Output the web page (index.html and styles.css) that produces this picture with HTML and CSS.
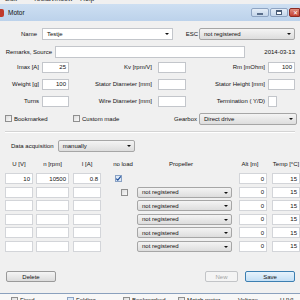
FILE: index.html
```html
<!DOCTYPE html>
<html lang="en">
<head>
    <meta charset="UTF-8">
    <title>Motor</title>
    <link rel="stylesheet" href="styles.css">
</head>
<body>
    <div class="menubar">
        <span class="m-edit">Edit</span>
        <span class="m-tools">Tools</span>
        <span class="m-window">Window</span>
        <span>Help</span>
    </div>

    <div class="window">
        <div class="titlebar">
            <span class="app-icon"></span>
            <span class="title">Motor</span>
            <div class="controls">
                <span class="ctl min"><i></i></span>
                <span class="ctl max"><i></i></span>
                <span class="ctl close">&#x2715;</span>
            </div>
        </div>

        <div class="form">
            <div class="row name-row">
                <span class="lbl w-name">Name</span>
                <div class="combo edit w-namebox">Testje<span class="arrow"></span></div>
                <span class="lbl w-esc">ESC</span>
                <div class="combo w-esc-box">not registered<span class="arrow"></span></div>
            </div>

            <div class="row remarks-row">
                <span class="lbl w-remarks">Remarks, Source</span>
                <div class="field w-remarks-box"></div>
                <span class="date">2014-03-13</span>
            </div>

            <div class="row spec-row first">
                <span class="lbl c1">Imax [A]</span>
                <div class="field num s1">25</div>
                <span class="lbl c2">Kv [rpm/V]</span>
                <div class="field num s2"></div>
                <span class="lbl c3">Rm [mOhm]</span>
                <div class="field num s3">100</div>
            </div>
            <div class="row spec-row">
                <span class="lbl c1">Weight [g]</span>
                <div class="field num s1">100</div>
                <span class="lbl c2">Stator Diameter [mm]</span>
                <div class="field num s2"></div>
                <span class="lbl c3">Stator Height [mm]</span>
                <div class="field num s3"></div>
            </div>
            <div class="row spec-row">
                <span class="lbl c1">Turns</span>
                <div class="field num s1"></div>
                <span class="lbl c2">Wire Diameter [mm]</span>
                <div class="field num s2"></div>
                <span class="lbl c3">Termination ( Y/D)</span>
                <div class="field tiny"></div>
            </div>

            <div class="row check-row">
                <label class="chk-item first"><span class="box"></span>Bookmarked</label>
                <label class="chk-item"><span class="box"></span>Custom made</label>
                <div class="gearbox">
                    <span class="lbl">Gearbox</span>
                    <div class="combo w-gear">Direct drive<span class="arrow"></span></div>
                </div>
            </div>

            <div class="separator"></div>

            <div class="row acq-row">
                <span class="lbl">Data acquisition</span>
                <div class="combo w-acq">manually<span class="arrow"></span></div>
            </div>

            <div class="data">
                <span class="hd">U [V]</span>
                <span class="hd">n [rpm]</span>
                <span class="hd">I [A]</span>
                <span class="hd hd-noload">no load</span>
                <span class="hd hd-prop">Propeller</span>
                <span class="hd hd-alt">Alt [m]</span>
                <span class="hd">Temp [&deg;C]</span>

                <div class="field num d-u">10</div>
                <div class="field num d-n">10500</div>
                <div class="field num d-i">0.8</div>
                <div class="cell"><span class="box checked first-box"><svg viewBox="0 0 7 7" width="7" height="7"><path d="M1.2 3.6 L2.8 5.2 L5.8 1.4" fill="none" stroke="#1f4f9a" stroke-width="1.2"/></svg></span></div>
                <div class="cell"></div>
                <div class="field num d-alt">0</div>
                <div class="field num d-temp">15</div>

                <div class="field d-u"></div>
                <div class="field d-n"></div>
                <div class="field d-i"></div>
                <div class="cell"><span class="box second-box"></span></div>
                <div class="combo d-prop">not registered<span class="arrow"></span></div>
                <div class="field num d-alt">0</div>
                <div class="field num d-temp">15</div>

                <div class="field d-u"></div>
                <div class="field d-n"></div>
                <div class="field d-i"></div>
                <div class="cell"></div>
                <div class="combo d-prop">not registered<span class="arrow"></span></div>
                <div class="field num d-alt">0</div>
                <div class="field num d-temp">15</div>

                <div class="field d-u"></div>
                <div class="field d-n"></div>
                <div class="field d-i"></div>
                <div class="cell"></div>
                <div class="combo d-prop">not registered<span class="arrow"></span></div>
                <div class="field num d-alt">0</div>
                <div class="field num d-temp">15</div>

                <div class="field d-u"></div>
                <div class="field d-n"></div>
                <div class="field d-i"></div>
                <div class="cell"></div>
                <div class="combo d-prop">not registered<span class="arrow"></span></div>
                <div class="field num d-alt">0</div>
                <div class="field num d-temp">15</div>

                <div class="field d-u"></div>
                <div class="field d-n"></div>
                <div class="field d-i"></div>
                <div class="cell"></div>
                <div class="combo d-prop">not registered<span class="arrow"></span></div>
                <div class="field num d-alt">0</div>
                <div class="field num d-temp">15</div>
            </div>

            <div class="row buttons">
                <button class="btn delete">Delete</button>
                <button class="btn new" disabled>New</button>
                <button class="btn save">Save</button>
            </div>
        </div>
    </div>

    <div class="under">
        <label class="u-item u1"><span class="box"></span>Fixed</label>
        <label class="u-item u2"><span class="box checked"></span>Folding</label>
        <label class="u-item u3"><span class="box"></span>Bookmarked</label>
        <label class="u-item u4"><span class="box"></span>Match motor</label>
        <span class="u-item u5">Voltage</span>
        <span class="u-item">U [V]</span>
    </div>
</body>
</html>
```

FILE: styles.css
```css
* {
    box-sizing: border-box;
}
body {
    margin: 0;
    width: 300px;
    height: 300px;
    overflow: hidden;
    font-family: "Liberation Sans", Arial, sans-serif;
    font-size: 6px;
    color: #111;
    background: #f0f0f0;
}

/* menu bar of the main window, mostly hidden behind the dialog */
.menubar {
    height: 4px;
    overflow: hidden;
    display: flex;
    padding-left: 5px;
    background: #f0f0f0;
}
.menubar span {
    font-size: 7px;
    line-height: 8px;
    margin-top: -5px;
    color: #333;
}
.m-edit { width: 28px; }
.m-tools { width: 15px; }
.m-window { width: 32px; }

/* dialog */
.window {
    height: 289px;
    overflow: hidden;
    background: #f0f0f0;
}
.titlebar {
    height: 17px;
    display: flex;
    align-items: center;
    background: linear-gradient(#cddff2, #bcd2eb);
}
.app-icon {
    width: 4px;
    height: 8px;
    background: #c0392b;
    border-radius: 0 2px 2px 0;
}
.title {
    margin-left: 4px;
    font-size: 6.5px;
    color: #111;
}
.controls {
    margin-left: auto;
    align-self: flex-start;
    margin-top: 4px;
    display: flex;
    gap: 1px;
}
.ctl {
    height: 9px;
    width: 18px;
    border: 1px solid #8ea4c2;
    border-radius: 2px;
    background: linear-gradient(#e4edf7, #c5d6ea);
    display: flex;
    align-items: center;
    justify-content: center;
}
.ctl.min i {
    width: 6px;
    height: 2px;
    margin-top: 2px;
    background: #fff;
    border: 1px solid #5a6f8c;
}
.ctl.max i {
    width: 6px;
    height: 5px;
    border: 1px solid #4a5d78;
    border-top-width: 2px;
    background: #fff;
}
.ctl.close {
    width: 11px;
    border-color: #8c2b22;
    border-radius: 2px 0 0 2px;
    background: linear-gradient(#e08c7f, #c54132);
    color: #fff;
    font-size: 6px;
    justify-content: flex-start;
    padding-left: 3px;
}

.form {
    padding-top: 6px;
}
.row {
    display: flex;
    align-items: center;
}
.lbl {
    white-space: nowrap;
}

/* inputs */
.field {
    height: 11px;
    background: #fff;
    border: 1px solid #c3c6cb;
    display: flex;
    align-items: center;
    padding: 0 2px;
}
.field.num {
    justify-content: flex-end;
}
.combo {
    position: relative;
    height: 12px;
    display: flex;
    align-items: center;
    padding-left: 4px;
    border: 1px solid #a6a6a6;
    border-radius: 2px;
    background: linear-gradient(#f4f4f4, #dddddd);
}
.combo.edit {
    background: #fff;
    border: 1px solid #c3c6cb;
    border-radius: 0;
}
.arrow {
    position: absolute;
    right: 3px;
    top: 4px;
    border-left: 2px solid transparent;
    border-right: 2px solid transparent;
    border-top: 2px solid #111;
}

/* name row */
.name-row {
    height: 13px;
}
.w-name {
    width: 37px;
    text-align: right;
    margin-right: 5px;
}
.w-namebox {
    width: 131px;
    height: 12px;
}
.w-esc {
    width: 25px;
    text-align: right;
    margin-right: 1px;
}
.w-esc-box {
    width: 96px;
}

.remarks-row {
    height: 13px;
    margin-top: 5px;
}
.w-remarks {
    width: 52px;
    text-align: right;
    margin-right: 3px;
}
.w-remarks-box {
    width: 190px;
    height: 12px;
}
.date {
    margin-left: auto;
    padding-right: 5px;
}

/* motor data rows */
.spec-row {
    height: 12px;
    margin-top: 5px;
}
.spec-row.first {
    margin-top: 3px;
}
.c1 {
    width: 39px;
    text-align: right;
    margin-right: 3px;
}
.c2 {
    width: 83px;
    text-align: right;
    margin-right: 6px;
}
.c3 {
    width: 79px;
    text-align: right;
    margin-right: 3px;
}
.s1 { width: 27px; }
.s2 { width: 28px; }
.s3 { width: 27px; }
.tiny { width: 9px; }

/* checkboxes */
.box {
    display: inline-block;
    width: 7px;
    height: 7px;
    border: 1px solid #8f8f8f;
    background: linear-gradient(135deg, #dcdcdc, #fafafa);
    vertical-align: middle;
}
.box.checked {
    border-color: #8aa2c4;
    background: #dde9f6;
    position: relative;
}
.box.checked svg {
    position: absolute;
    left: -1px;
    top: -1px;
}

.check-row {
    height: 13px;
    margin-top: 5px;
    padding-left: 5px;
    padding-right: 3px;
}
.chk-item {
    display: flex;
    align-items: center;
    gap: 2px;
}
.chk-item.first {
    width: 68px;
}
.gearbox {
    margin-left: auto;
    display: flex;
    align-items: center;
    gap: 2px;
}
.w-gear {
    width: 98px;
}

.separator {
    margin: 6px 5px 0;
    border-top: 1px solid #d4d4d4;
    border-bottom: 1px solid #fff;
}

.acq-row {
    height: 12px;
    margin-top: 7px;
    padding-left: 11px;
    gap: 4px;
}
.w-acq {
    width: 77px;
}

/* measurement table */
.data {
    display: grid;
    grid-template-columns: 31px 37px 32px 32px 102px 33px 28px;
    grid-template-rows: 13px;
    grid-auto-rows: 13.5px;
    align-items: center;
    padding-left: 5px;
    margin-top: 7px;
}
.hd {
    align-self: start;
    line-height: 10px;
    text-align: center;
    width: 28px;
    white-space: nowrap;
}
.data .hd:nth-child(2) { width: 33px; }
.hd-noload {
    width: 32px;
    margin-left: 2px;
}
.hd-prop { width: 88px; }
.hd-alt { width: 22px; }
.data .field {
    border-color: #d3d5d9;
}
.d-u { width: 28px; }
.d-n { width: 33px; }
.d-i { width: 28px; }
.d-prop {
    width: 95px;
    height: 11px;
}
.d-alt { width: 28px; }
.d-temp { width: 28px; }
.cell {
    height: 11px;
    display: flex;
    align-items: center;
}
.first-box { margin-left: 10px; }
.second-box { margin-left: 16px; }

/* buttons */
.buttons {
    margin-top: 18px;
    padding: 0 5px 0 6px;
}
.btn {
    height: 11px;
    padding: 0;
    font-family: inherit;
    font-size: 6px;
    color: #111;
    border: 1px solid #9a9a9a;
    border-radius: 2px;
    background: linear-gradient(#f5f5f5, #dcdcdc);
}
.delete { width: 50px; }
.new {
    width: 33px;
    margin-left: auto;
    color: #a3a3a3;
    border-color: #c2c4c7;
    background: #f4f4f4;
}
.save {
    width: 50px;
    margin-left: 7px;
    border-color: #3c7fb1;
    background: linear-gradient(#e7f3fc, #c3dff5);
}

/* strip of the main window below the dialog */
.under {
    height: 7px;
    border-top: 1px solid #8aa0bd;
    background: #f7f7f7;
    display: flex;
    align-items: flex-start;
    padding: 2px 0 0 11px;
    overflow: hidden;
}
.u-item {
    display: flex;
    gap: 2px;
    line-height: 8px;
}
.u-item .box {
    margin-top: 1px;
}
.u1 { width: 56px; }
.u2 { width: 56px; }
.u3 { width: 55px; }
.u4 { width: 60px; }
.u5 { width: 42px; }
```
